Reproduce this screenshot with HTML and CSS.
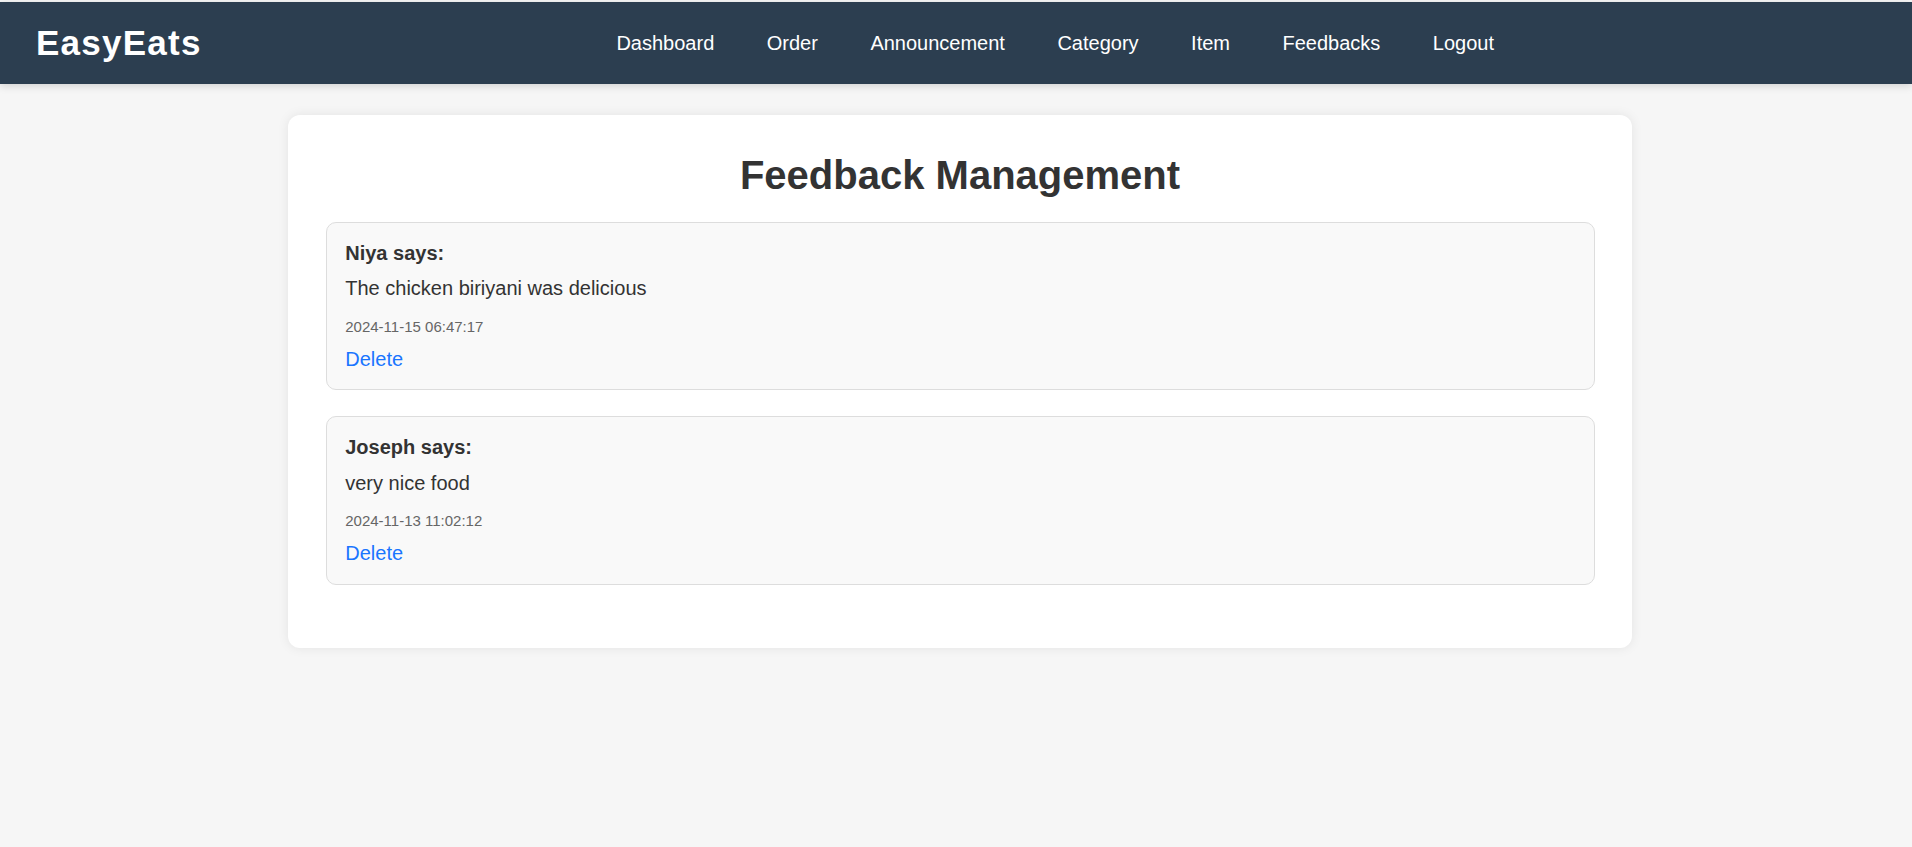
FILE: index.html
```html
<!DOCTYPE html>
<html lang="en">
<head>
<meta charset="utf-8">
<title>EasyEats - Feedback Management</title>
<link rel="stylesheet" href="styles.css">
</head>
<body>
<header class="topbar">
  <div class="logo">EasyEats</div>
  <nav class="nav">
    <a href="#" class="nav-link">Dashboard</a>
    <a href="#" class="nav-link">Order</a>
    <a href="#" class="nav-link">Announcement</a>
    <a href="#" class="nav-link">Category</a>
    <a href="#" class="nav-link">Item</a>
    <a href="#" class="nav-link">Feedbacks</a>
    <a href="#" class="nav-link">Logout</a>
  </nav>
</header>
<main class="page">
  <section class="panel">
    <h1 class="title">Feedback Management</h1>
    <div class="feedback">
      <div class="name">Niya says:</div>
      <p class="message">The chicken biriyani was delicious</p>
      <div class="date">2024-11-15 06:47:17</div>
      <a href="#" class="delete">Delete</a>
    </div>
    <div class="feedback">
      <div class="name">Joseph says:</div>
      <p class="message">very nice food</p>
      <div class="date">2024-11-13 11:02:12</div>
      <a href="#" class="delete">Delete</a>
    </div>
  </section>
</main>
</body>
</html>
```

FILE: styles.css
```css
* {
  box-sizing: border-box;
}

html, body {
  margin: 0;
}

body {
  padding-top: 2px;
  background: #f6f6f6;
  font-family: "Liberation Sans", Arial, sans-serif;
  color: #333;
  min-height: 847px;
}

.topbar {
  height: 82px;
  background: #2c3e50;
  display: flex;
  align-items: center;
  padding-left: 36px;
  box-shadow: 0 2px 8px rgba(0, 0, 0, 0.15);
}

.logo {
  color: #ffffff;
  font-weight: bold;
  font-size: 35px;
  letter-spacing: 1.25px;
  line-height: 40px;
}

.nav {
  display: flex;
  gap: 52.5px;
  margin-left: auto;
  margin-right: 418px;
}

.nav-link {
  color: #ffffff;
  text-decoration: none;
  font-size: 20px;
  line-height: 23px;
}

.page {
  padding-left: 8px;
  padding-top: 31px;
}

.panel {
  width: 1344px;
  margin: 0 auto;
  background: #ffffff;
  border-radius: 12px;
  padding: 37.5px 37.5px 37.5px;
  box-shadow: 0 0 12px rgba(0, 0, 0, 0.08);
}

.title {
  margin: 0 0 25px;
  text-align: center;
  font-size: 40px;
  line-height: 44.7px;
  font-weight: bold;
  color: #333;
}

.feedback {
  background: #f9f9f9;
  border: 1px solid #dddddd;
  border-radius: 10px;
  padding: 18.75px;
  margin-bottom: 26px;
}

.name {
  font-weight: bold;
  font-size: 20px;
  line-height: 23px;
  color: #333;
}

.message {
  margin: 12.5px 0 0;
  font-size: 20px;
  line-height: 23px;
  color: #333;
}

.date {
  margin-top: 17.7px;
  font-size: 15px;
  line-height: 17px;
  color: #666;
}

.delete {
  display: block;
  margin-top: 12.5px;
  font-size: 20px;
  line-height: 23px;
  color: #1a75ff;
  text-decoration: none;
  width: max-content;
}
```
